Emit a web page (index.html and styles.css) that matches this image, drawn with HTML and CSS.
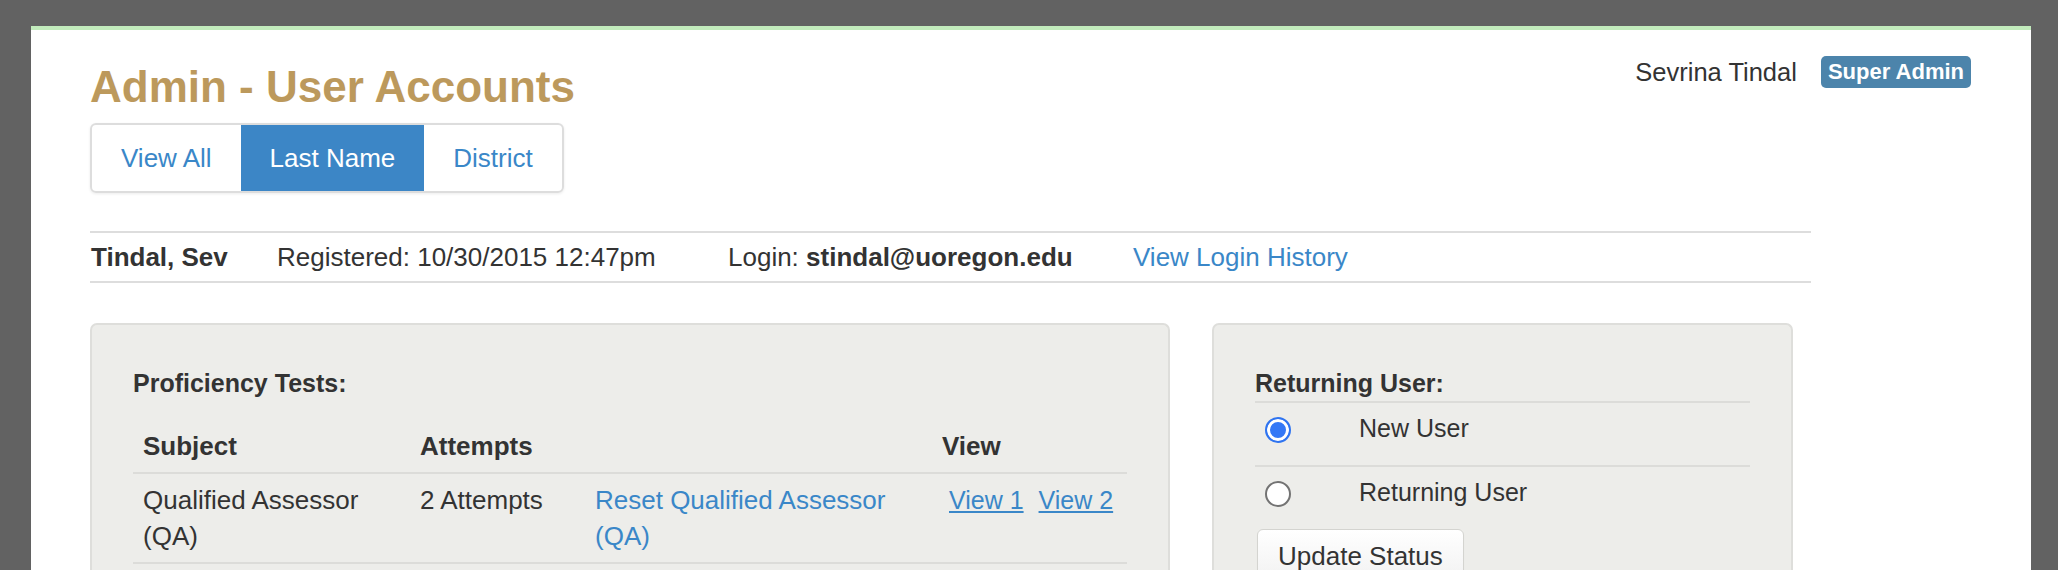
FILE: index.html
```html
<html>
<head>
  <link rel="stylesheet" href="styles.css">
</head>
<body>
  <div class="page">
    <div class="header">
      <h1>Admin - User Accounts</h1>
      <div class="user">
        <span class="user-name">Sevrina Tindal</span>
        <span class="badge">Super Admin</span>
      </div>
    </div>

    <div class="tabs">
      <a class="tab">View All</a>
      <a class="tab active">Last Name</a>
      <a class="tab">District</a>
    </div>

    <div class="content">
      <div class="info">
        <span class="who">Tindal, Sev</span>
        <span class="reg">Registered: 10/30/2015 12:47pm</span>
        <span class="login">Login: <b>stindal@uoregon.edu</b></span>
        <a class="link">View Login History</a>
      </div>

      <div class="panels">
        <div class="panel tests">
          <h4>Proficiency Tests:</h4>
          <table class="grid">
            <thead>
              <tr>
                <th class="c-subject">Subject</th>
                <th class="c-attempts">Attempts</th>
                <th class="c-reset"></th>
                <th class="c-view">View</th>
              </tr>
            </thead>
            <tbody>
              <tr>
                <td>Qualified Assessor (QA)</td>
                <td>2 Attempts</td>
                <td><a class="link">Reset Qualified Assessor (QA)</a></td>
                <td class="views"><a class="link u">View 1</a> <a class="link u">View 2</a></td>
              </tr>
              <tr>
                <td>&nbsp;</td>
                <td></td>
                <td></td>
                <td></td>
              </tr>
            </tbody>
          </table>
        </div>

        <div class="panel status">
          <h4>Returning User:</h4>
          <table class="choices">
            <tr>
              <td class="c-radio"><input type="radio" name="ret" id="r-new" checked></td>
              <td><label for="r-new">New User</label></td>
            </tr>
            <tr>
              <td class="c-radio"><input type="radio" name="ret" id="r-old"></td>
              <td><label for="r-old">Returning User</label></td>
            </tr>
          </table>
          <button class="btn">Update Status</button>
        </div>
      </div>
    </div>
  </div>
</body>
</html>
```

FILE: styles.css
```css
html, body {
  margin: 0;
  padding: 0;
}
body {
  background: #626262;
  padding-top: 26px;
  font-family: "Liberation Sans", Arial, sans-serif;
  font-size: 25px;
  line-height: 36px;
  color: #333333;
  overflow: hidden;
}
.page {
  margin: 0 27px 0 31px;
  background: #ffffff;
  border-top: 4px solid #c2ebbc;
  padding: 0 60px 0 59px;
  min-height: 600px;
}

.header {
  display: flex;
  justify-content: space-between;
  align-items: flex-start;
}
h1 {
  margin: 33px 0 0 0;
  font-size: 44px;
  line-height: 48px;
  font-weight: bold;
  color: #bc995c;
}
.user {
  margin-top: 24px;
  display: flex;
  align-items: center;
}
.user-name {
  font-size: 25.5px;
  margin-right: 24px;
}
.badge {
  background: #4c84ab;
  color: #ffffff;
  font-weight: bold;
  font-size: 22px;
  line-height: 24px;
  padding: 4px 7px;
  border-radius: 5px;
}

.tabs {
  display: inline-flex;
  margin-top: 12px;
  border: 2px solid #dddddd;
  border-radius: 6px;
  overflow: hidden;
  box-shadow: 0 1px 3px rgba(0, 0, 0, 0.08);
}
.tab {
  font-size: 26px;
  line-height: 36px;
  padding: 15px 29px;
  color: #3a87c8;
  cursor: pointer;
}
.tab.active {
  background: #3c86c6;
  color: #ffffff;
}

.content {
  width: 1721px;
}
.info {
  margin-top: 38px;
  border-top: 2px solid #dddddd;
  border-bottom: 2px solid #dddddd;
  padding: 6px 0 6px 1px;
  display: flex;
  font-size: 26px;
}
.who {
  width: 186px;
  font-weight: bold;
}
.reg {
  width: 451px;
}
.login {
  width: 405px;
}
.link {
  color: #3a87c8;
  cursor: pointer;
}
.link.u {
  text-decoration: underline;
}

.panels {
  display: flex;
  gap: 42px;
  margin-top: 40px;
}
.panel {
  background: #ededea;
  border: 2px solid #dededb;
  border-bottom: 0;
  border-radius: 7px 7px 0 0;
  padding: 40px 41px 0 41px;
  height: 300px;
}
.tests {
  width: 994px;
}
.status {
  width: 495px;
}
h4 {
  margin: 0;
  font-size: 25px;
  line-height: 36px;
  font-weight: bold;
}

table {
  border-collapse: collapse;
  width: 100%;
  font: inherit;
  color: inherit;
}
.grid {
  margin-top: 17px;
  font-size: 26px;
  table-layout: fixed;
}
.grid th {
  text-align: left;
  font-weight: bold;
  padding: 10px 10px 8px 10px;
  border-bottom: 2px solid #dcdcd9;
}
.grid td {
  vertical-align: top;
  padding: 8px 10px 8px 10px;
  border-bottom: 2px solid #dcdcd9;
}
.c-subject {
  width: 257px;
}
.c-attempts {
  width: 155px;
}
.c-reset {
  width: 327px;
}
.grid td.views {
  padding-left: 17px;
  padding-right: 0;
  white-space: nowrap;
  font-size: 25px;
}
.views a + a {
  margin-left: 8px;
}

.choices {
  border-top: 2px solid #dcdcd9;
}
.choices tr + tr td {
  border-top: 2px solid #dcdcd9;
}
.choices td {
  vertical-align: top;
  padding: 7px 10px 19px 10px;
}
.choices td.c-radio {
  width: 74px;
}
input[type=radio] {
  -webkit-appearance: none;
  appearance: none;
  box-sizing: border-box;
  width: 26px;
  height: 26px;
  margin: 7px 0 0 0;
  border-radius: 50%;
  border: 2px solid #737373;
  background: #ffffff;
  display: block;
}
input[type=radio]:checked {
  border-color: #2f74f0;
  background: #3478f6;
  box-shadow: inset 0 0 0 3px #ffffff;
}
label {
  cursor: pointer;
}

.btn {
  margin-left: 2px;
  font-family: "Liberation Sans", Arial, sans-serif;
  font-size: 26px;
  line-height: 36px;
  color: #333333;
  padding: 8px 20px;
  border: 1px solid #d4d4d0;
  border-radius: 6px;
  background: linear-gradient(#ffffff, #f1f1f1);
  box-shadow: 0 1px 1px rgba(0, 0, 0, 0.05);
}
```
